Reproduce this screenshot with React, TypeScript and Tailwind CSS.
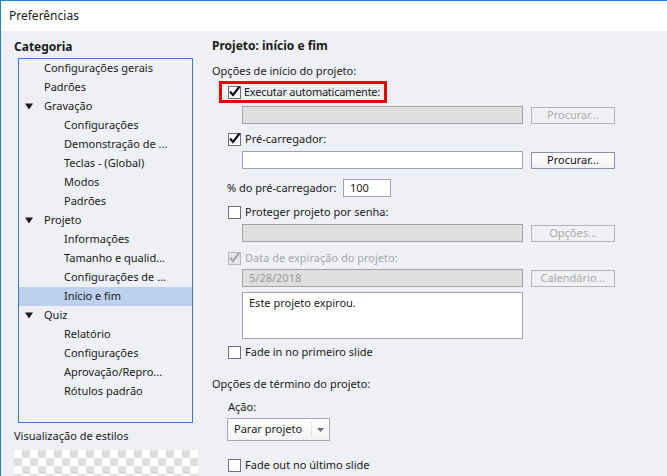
import React from "react";

const font = { fontFamily: '"Noto Sans", "Open Sans", sans-serif' };

type TreeItem = { label: string; level: 0 | 1; caret?: boolean; selected?: boolean };

const tree: TreeItem[] = [
  { label: "Configurações gerais", level: 0 },
  { label: "Padrões", level: 0 },
  { label: "Gravação", level: 0, caret: true },
  { label: "Configurações", level: 1 },
  { label: "Demonstração de ...", level: 1 },
  { label: "Teclas - (Global)", level: 1 },
  { label: "Modos", level: 1 },
  { label: "Padrões", level: 1 },
  { label: "Projeto", level: 0, caret: true },
  { label: "Informações", level: 1 },
  { label: "Tamanho e qualid...", level: 1 },
  { label: "Configurações de ...", level: 1 },
  { label: "Início e fim", level: 1, selected: true },
  { label: "Quiz", level: 0, caret: true },
  { label: "Relatório", level: 1 },
  { label: "Configurações", level: 1 },
  { label: "Aprovação/Repro...", level: 1 },
  { label: "Rótulos padrão", level: 1 },
];

function Caret() {
  return (
    <svg width="8" height="7" viewBox="0 0 8 7" className="absolute left-[6px] top-[6px]">
      <path d="M0 0.5 H8 L4 6.5 Z" fill="#1a1a1a" />
    </svg>
  );
}

function Checkbox({ checked, disabled }: { checked?: boolean; disabled?: boolean }) {
  return (
    <span
      className={`relative w-[13px] h-[13px] shrink-0 border ${
        disabled ? "border-[#b8b8c0] bg-[#e6e6ea]" : "border-[#6e7080] bg-white"
      }`}
    >
      {checked && (
        <svg width="13" height="13" viewBox="0 0 13 13" className="absolute -left-[1px] -top-[2px]">
          <path
            d="M2 6.5 L5 10 L11.5 1.5"
            fill="none"
            stroke={disabled ? "#a9a9ae" : "#111"}
            strokeWidth="2.2"
          />
        </svg>
      )}
    </span>
  );
}

function CheckRow({
  label,
  checked,
  disabled,
  className = "",
}: {
  label: string;
  checked?: boolean;
  disabled?: boolean;
  className?: string;
}) {
  return (
    <div className={`h-[20px] flex items-center gap-[4px] pl-[16px] whitespace-nowrap ${className}`}>
      <Checkbox checked={checked} disabled={disabled} />
      <span className={disabled ? "text-[#a8a8ad]" : "text-[#1a1a1a]"}>{label}</span>
    </div>
  );
}

function FieldRow({
  value,
  button,
  disabled,
  buttonDisabled,
  className = "",
}: {
  value?: string;
  button: string;
  disabled?: boolean;
  buttonDisabled?: boolean;
  className?: string;
}) {
  return (
    <div className={`flex items-start pl-[30px] ${className}`}>
      <div
        className={`w-[281px] h-[18px] border flex items-center px-[6px] ${
          disabled
            ? "bg-[#dfdfdf] border-[#a3a3a3] text-[#9a9a9a]"
            : "bg-white border-[#9ea3b8] text-[#1a1a1a]"
        }`}
      >
        {value}
      </div>
      <div
        className={`ml-[8px] mt-[1px] w-[84px] h-[17px] border flex items-center justify-center ${
          buttonDisabled
            ? "border-[#b5b5b8] text-[#ababab] bg-[#f0f1f4]"
            : "border-[#8c90a8] text-[#111] bg-gradient-to-b from-white to-[#f1f1f4]"
        }`}
      >
        {button}
      </div>
    </div>
  );
}

export default function App() {
  return (
    <div
      className="w-[667px] h-[476px] overflow-hidden border-t border-l border-[#1883d7] bg-[#eef0f5] text-[11px] text-[#1a1a1a] flex flex-col"
      style={font}
    >
      <div className="h-[30px] shrink-0 bg-white flex items-center pl-[8px] text-[12px]">Preferências</div>

      <div className="flex flex-1 min-h-0">
        {/* Left column */}
        <div className="w-[211px] shrink-0 flex flex-col pl-[13px]">
          <div className="h-[27px] flex items-end pb-[2px] font-bold text-[12px]">Categoria</div>
          <div className="ml-[4px] w-[175px] h-[365px] border border-[#3a7bd5]">
            {tree.map((t, i) => (
              <div
                key={i}
                className={`relative h-[19px] leading-[17px] pb-[2px] flex items-center ${t.selected ? "bg-[#bdd0ee]" : ""} ${
                  t.level === 0 ? "pl-[25px]" : "pl-[45px]"
                }`}
              >
                {t.caret && <Caret />}
                {t.label}
              </div>
            ))}
          </div>
          <div className="h-[24px] mt-[1px] flex items-center">Visualização de estilos</div>
          <div className="mt-[2px] w-[184px] flex-1 bg-[conic-gradient(#dedede_25%,#ffffff_0_50%,#dedede_0_75%,#ffffff_0)] bg-[length:16px_16px]" />
        </div>

        {/* Right column */}
        <div className="flex-1 flex flex-col">
          <div className="h-[30px] flex items-center pb-[1px] font-bold text-[12px]">Projeto: início e fim</div>
          <div className="h-[20px] flex items-center">Opções de início do projeto:</div>

          <div className="ml-[7px] w-[168px] h-[22px] border-[3px] border-[#ee0000] flex items-center gap-[3px] pl-[6px] whitespace-nowrap">
            <Checkbox checked />
            <span className="tracking-[-0.25px]">Executar automaticamente:</span>
          </div>
          <FieldRow disabled buttonDisabled button="Procurar..." className="mt-[3px]" />

          <CheckRow label="Pré-carregador:" checked className="mt-[5px]" />
          <FieldRow button="Procurar..." className="mt-[2px]" />

          <div className="mt-[10px] h-[18px] flex items-center pl-[15px]">
            <span className="w-[116px]">% do pré-carregador:</span>
            <div className="w-[48px] h-[18px] bg-white border border-[#9ea3b8] flex items-center px-[6px]">100</div>
          </div>

          <CheckRow label="Proteger projeto por senha:" className="mt-[5px]" />
          <FieldRow disabled buttonDisabled button="Opções..." className="mt-[2px]" />

          <CheckRow label="Data de expiração do projeto:" checked disabled className="mt-[6px]" />
          <FieldRow disabled buttonDisabled value="5/28/2018" button="Calendário..." className="mt-[1px]" />

          <div className="ml-[30px] mt-[5px] w-[281px] h-[47px] bg-white border border-[#9ea3b8] px-[6px] py-[2px]">
            Este projeto expirou.
          </div>

          <CheckRow label="Fade in no primeiro slide" className="mt-[3px]" />

          <div className="mt-[12px] h-[20px] flex items-center">Opções de término do projeto:</div>
          <div className="mt-[3px] h-[20px] flex items-center pl-[16px]">Ação:</div>
          <div className="ml-[15px] mt-[1px] w-[103px] h-[23px] border border-[#a5a8b8] bg-gradient-to-b from-white to-[#f3f3f6] flex items-center">
            <span className="flex-1 pl-[6px]">Parar projeto</span>
            <span className="w-[1px] h-[15px] bg-[#e2e2e8]" />
            <svg width="17" height="8" viewBox="0 0 17 8">
              <path d="M5 2 H12 L8.5 6 Z" fill="#6b6e80" />
            </svg>
          </div>

          <CheckRow label="Fade out no último slide" className="mt-[14px]" />
        </div>
      </div>
    </div>
  );
}
